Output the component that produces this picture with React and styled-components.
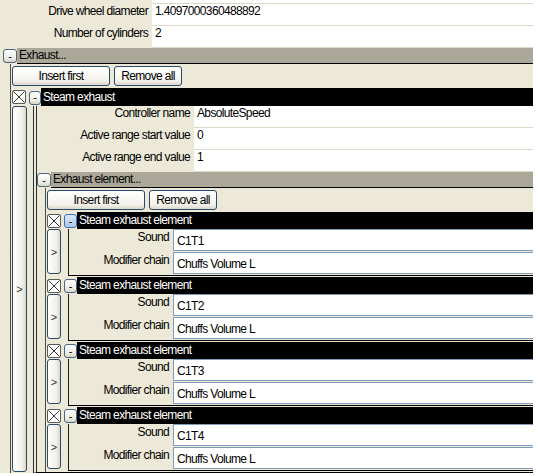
import React from 'react';
import styled, { createGlobalStyle } from 'styled-components';

const GlobalStyle = createGlobalStyle`
  html, body {
    margin: 0;
    padding: 0;
    background: #fff;
  }
`;

const Page = styled.div`
  width: 533px;
  background: #ece9d8;
  font-family: "Liberation Sans", Arial, sans-serif;
  font-size: 12px;
  letter-spacing: -0.65px;
  line-height: 14px;
  color: #000;
`;

/* bottom sliver of a row that is scrolled out above */
const ScrollTail = styled.div`
  display: grid;
  grid-template-columns: 152px 1fr;
  height: 4px;
`;

const TailValue = styled.div`
  grid-column: 2;
  background: #fff;
  border-bottom: 1px solid #dcd9c8;
`;

const PropRow = styled.div`
  display: grid;
  grid-template-columns: ${p => p.$labelWidth}px 1fr;
  height: 22px;
`;

const PropLabel = styled.div`
  text-align: right;
  padding: ${p => (p.$boxed ? '1px' : '0')} 4px 0 0;
  white-space: nowrap;
  overflow: hidden;
`;

const PropValue = styled.div`
  background: #fff;
  border-bottom: 1px solid #dcd9c8;
  padding: 0 0 0 3px;
  white-space: nowrap;
  overflow: hidden;
`;

const TextBox = styled.div`
  box-sizing: border-box;
  height: 22px;
  background: #fff;
  border: 1px solid #7f9db9;
  border-right-width: 0;
  padding: 4px 3px 0;
  white-space: nowrap;
  overflow: hidden;
`;

const SectionHeader = styled.div`
  display: flex;
  height: 16px;
  padding-left: ${p => p.$inset}px;
`;

const SectionTitle = styled.div`
  flex: 1;
  background: #aca899;
  border-bottom: 1px solid #000;
  padding-left: 2px;
  line-height: 15px;
`;

const Toggle = styled.button`
  box-sizing: border-box;
  flex: none;
  width: ${p => p.$w}px;
  height: 14px;
  margin-top: 1px;
  padding: 0;
  border: 1px solid ${p => (p.$hot ? '#3d6fb8' : '#4a6680')};
  border-radius: 3px;
  background: ${p =>
    p.$hot
      ? 'linear-gradient(#dce8f8, #aec6ea)'
      : 'linear-gradient(#ffffff, #ecebe4 70%, #d8d3c6)'};
  font: 11px/9px "Liberation Sans", Arial, sans-serif;
  color: #000;
  display: flex;
  align-items: center;
  justify-content: center;
`;

const SectionBody = styled.div`
  margin-left: ${p => p.$indent}px;
  border-left: 1px solid #4c4c4c;
  padding-left: 1px;
`;

const Toolbar = styled.div`
  display: flex;
  gap: 4px;
  height: 24px;
  padding-top: 2px;
  box-sizing: border-box;
`;

const Button = styled.button`
  box-sizing: border-box;
  width: ${p => p.$w}px;
  height: 20px;
  padding: 0;
  border: 1px solid #2a4a6a;
  border-radius: 3px;
  background: linear-gradient(#ffffff, #f3f2ec 75%, #dcd7cb);
  font: inherit;
  letter-spacing: inherit;
  color: #000;
`;

const ItemHeader = styled.div`
  display: flex;
  align-items: center;
  height: ${p => p.$h}px;
`;

const DeleteBox = styled.button`
  box-sizing: border-box;
  flex: none;
  width: 14px;
  height: 14px;
  margin-right: 3px;
  padding: 0;
  border: 1px solid #5a5a5a;
  border-radius: 2px;
  background: #fff;
  display: flex;
  align-items: center;
  justify-content: center;
`;

const ItemTitle = styled.div`
  flex: 1;
  align-self: stretch;
  background: #000;
  color: #fff;
  padding-left: 2px;
  line-height: ${p => p.$h}px;
`;

const ItemBody = styled.div`
  display: flex;
  padding-bottom: ${p => p.$after}px;
`;

const SideButton = styled.button`
  box-sizing: border-box;
  flex: none;
  width: ${p => p.$w}px;
  margin-right: ${p => p.$gap}px;
  margin-bottom: ${p => p.$drop}px;
  padding: 0;
  border: 1px solid #2a4a6a;
  border-radius: 3px;
  background: linear-gradient(90deg, #ffffff, #f1efe7 70%, #dcd7cb);
  font: 11px "Liberation Sans", Arial, sans-serif;
  color: #333;
`;

const ItemContent = styled.div`
  flex: 1;
  border-left: 4px double #2e2e2e;
  border-bottom: 1px solid #000;
`;

const ElementContent = styled.div`
  flex: 1;
  display: grid;
  grid-template-columns: 104px 1fr;
  grid-auto-rows: 22px;
  row-gap: 1px;
  padding-bottom: 1px;
  border-left: 1px solid #1c1c1c;
  border-bottom: 1px solid #000;
`;

const CrossIcon = () => (
  <svg width="12" height="12" viewBox="0 0 12 12">
    <path d="M0.5 0.5L11.5 11.5M11.5 0.5L0.5 11.5" stroke="#3a3a3a" strokeWidth="1" fill="none" />
  </svg>
);

const elements = [
  { sound: 'C1T1', chain: 'Chuffs Volume L', hot: true },
  { sound: 'C1T2', chain: 'Chuffs Volume L' },
  { sound: 'C1T3', chain: 'Chuffs Volume L' },
  { sound: 'C1T4', chain: 'Chuffs Volume L' },
];

function ListButtons() {
  return (
    <Toolbar>
      <Button $w={98}>Insert first</Button>
      <Button $w={68}>Remove all</Button>
    </Toolbar>
  );
}

function ExhaustElement({ sound, chain, hot }) {
  return (
    <div>
      <ItemHeader $h={17}>
        <DeleteBox><CrossIcon /></DeleteBox>
        <Toggle $w={13} $hot={hot}>-</Toggle>
        <ItemTitle $h={17}>Steam exhaust element</ItemTitle>
      </ItemHeader>
      <ItemBody $after={1}>
        <SideButton $w={14} $gap={7} $drop={2}>&gt;</SideButton>
        <ElementContent>
          <PropLabel $boxed>Sound</PropLabel>
          <TextBox>{sound}</TextBox>
          <PropLabel $boxed>Modifier chain</PropLabel>
          <TextBox>{chain}</TextBox>
        </ElementContent>
      </ItemBody>
    </div>
  );
}

function SteamExhaust() {
  return (
    <div>
      <ItemHeader $h={18}>
        <DeleteBox><CrossIcon /></DeleteBox>
        <Toggle $w={12}>-</Toggle>
        <ItemTitle $h={18}>Steam exhaust</ItemTitle>
      </ItemHeader>
      <ItemBody $after={0}>
        <SideButton $w={15} $gap={6} $drop={1}>&gt;</SideButton>
        <ItemContent>
          <PropRow $labelWidth={157}>
            <PropLabel>Controller name</PropLabel>
            <PropValue>AbsoluteSpeed</PropValue>
          </PropRow>
          <PropRow $labelWidth={157}>
            <PropLabel>Active range start value</PropLabel>
            <PropValue>0</PropValue>
          </PropRow>
          <PropRow $labelWidth={157}>
            <PropLabel>Active range end value</PropLabel>
            <PropValue>1</PropValue>
          </PropRow>
          <SectionHeader $inset={0}>
            <Toggle $w={14}>-</Toggle>
            <SectionTitle>Exhaust element...</SectionTitle>
          </SectionHeader>
          <SectionBody $indent={8}>
            <ListButtons />
            {elements.map(el => (
              <ExhaustElement key={el.sound} {...el} />
            ))}
          </SectionBody>
        </ItemContent>
      </ItemBody>
    </div>
  );
}

export default function App() {
  return (
    <>
      <GlobalStyle />
      <Page>
        <ScrollTail>
          <TailValue />
        </ScrollTail>
        <PropRow $labelWidth={152}>
          <PropLabel>Drive wheel diameter</PropLabel>
          <PropValue>1.4097000360488892</PropValue>
        </PropRow>
        <PropRow $labelWidth={152}>
          <PropLabel>Number of cylinders</PropLabel>
          <PropValue>2</PropValue>
        </PropRow>
        <SectionHeader $inset={3}>
          <Toggle $w={14}>-</Toggle>
          <SectionTitle>Exhaust...</SectionTitle>
        </SectionHeader>
        <SectionBody $indent={10}>
          <ListButtons />
          <SteamExhaust />
        </SectionBody>
      </Page>
    </>
  );
}
